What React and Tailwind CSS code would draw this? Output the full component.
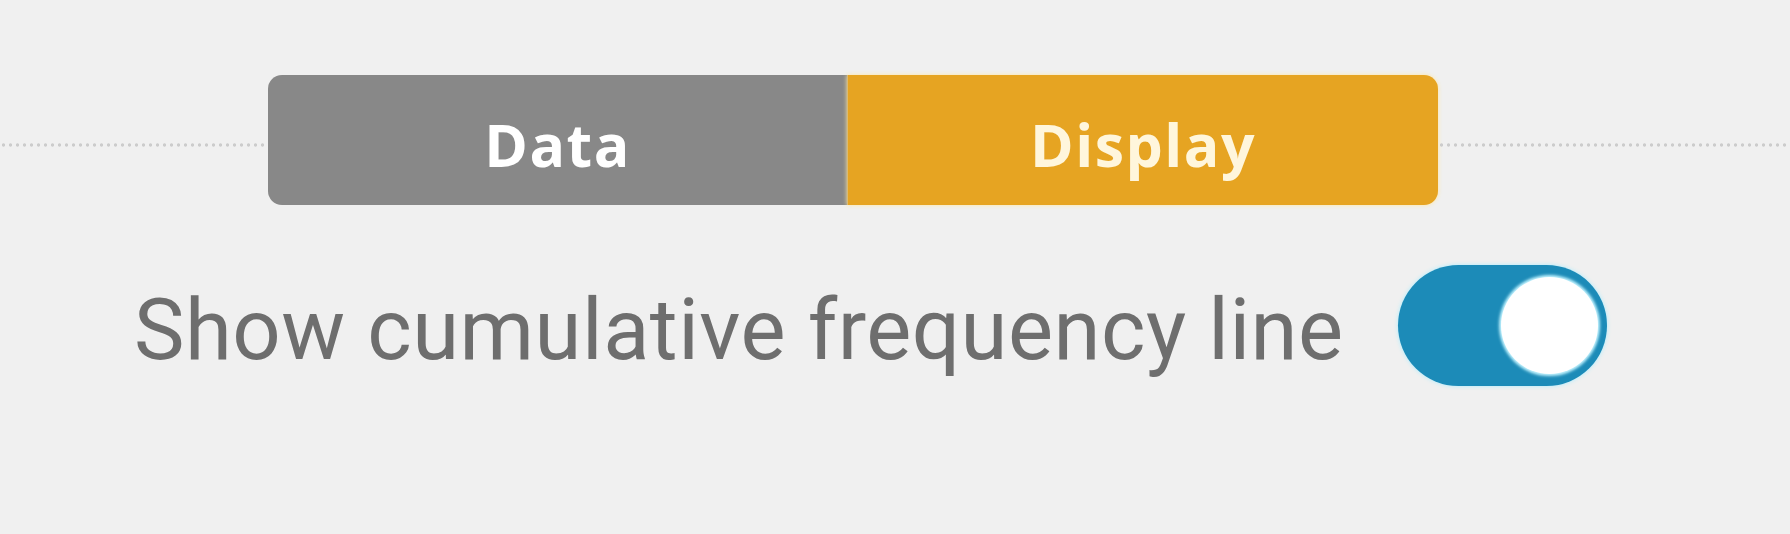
import { useState } from "react";

const Segmented = ({ tab, setTab }) => {
  const tabs = ["Data", "Display"];
  return (
    <div className="flex h-[130px] w-[1170px] rounded-[14px] font-['Open_Sans',sans-serif]">
      {tabs.map((t) => (
        <button
          key={t}
          onClick={() => setTab(t)}
          className={`flex items-center justify-center pt-[8px] text-[59px] leading-none font-bold tracking-[1.5px] ${
            t === "Data"
              ? "w-[579px] rounded-l-[14px]"
              : "flex-1 rounded-r-[14px] border-l border-[#d8bb78]"
          } ${
            tab === t
              ? "bg-[#e6a422] text-[#fff6dc] shadow-[0_0_4px_#ffe6a0]"
              : "bg-[#888888] text-white"
          }`}
        >
          {t}
        </button>
      ))}
    </div>
  );
};

const DottedRule = ({ className }) => (
  <div
    className={`h-[4px] mt-[68px] bg-[radial-gradient(circle,#cccccc_1.3px,transparent_2px)] bg-[length:7px_4px] bg-repeat-x ${className}`}
  />
);

export default function App() {
  const [tab, setTab] = useState("Display");
  const [cumulative, setCumulative] = useState(true);

  return (
    <div
      className="h-[534px] w-full bg-[#f0f0f0] pt-[75px]"
      style={{ fontFamily: 'Roboto, "Open Sans", sans-serif' }}
    >
      {/* tab bar on dotted rule */}
      <div className="flex items-start">
        <DottedRule className="w-[268px]" />
        <Segmented tab={tab} setTab={setTab} />
        <DottedRule className="flex-1" />
      </div>

      {/* option row */}
      <div className="flex items-center pl-[134px] mt-[60px] gap-[54px]">
        <span className="mt-[10px] text-[85px] leading-none text-[#6e6e6e] tracking-[0.5px]">
          Show cumulative frequency line
        </span>
        <button
          onClick={() => setCumulative(!cumulative)}
          className={`flex items-center w-[209px] h-[121px] rounded-full px-[9px] shadow-[0_0_4px_#a8ecff] ${
            cumulative ? "bg-[#1c8bb8] justify-end" : "bg-[#bdbdbd] justify-start"
          }`}
        >
          <span className="block w-[97px] h-[97px] rounded-full bg-white shadow-[0_0_3px_2px_#c4f4ff]" />
        </button>
      </div>
    </div>
  );
}
